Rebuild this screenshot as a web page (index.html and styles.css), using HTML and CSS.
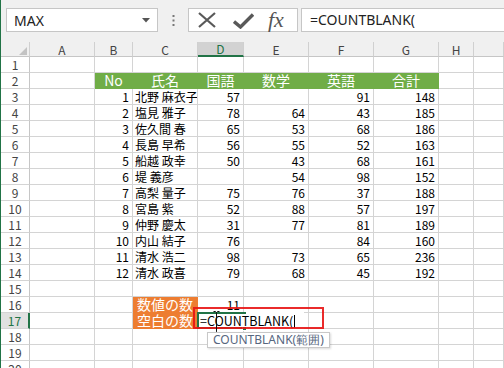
FILE: index.html
```html
<!DOCTYPE html>
<html>
<head>
    <title>COUNTBLANK</title>
    <link rel="stylesheet" href="styles.css">
</head>
<body>
<div class="app">
    <div class="bar">
        <div class="namebox">
            <span>MAX</span>
            <svg width="8" height="5" viewBox="0 0 8 5"><path d="M0 0 H8 L4 4.5 Z" fill="#555"/></svg>
        </div>
        <div class="grip">
            <svg width="3" height="11" viewBox="0 0 3 11"><rect x="0.5" y="0" width="2" height="2" fill="#777"/><rect x="0.5" y="4.5" width="2" height="2" fill="#777"/><rect x="0.5" y="9" width="2" height="2" fill="#777"/></svg>
        </div>
        <div class="buttons">
            <svg class="cancel" width="18" height="16" viewBox="0 0 18 16"><path d="M1 1 L17 15 M17 1 L1 15" stroke="#595959" stroke-width="2.2" fill="none"/></svg>
            <svg class="enter" width="21" height="16" viewBox="0 0 21 16"><path d="M1 8.5 L7.5 14 L20 1.5" stroke="#595959" stroke-width="3.4" fill="none"/></svg>
            <span class="fx">fx</span>
        </div>
        <div class="formula">=COUNTBLANK(</div>
    </div>

    <div class="sheet">
        <table class="grid">
            <colgroup>
                <col style="width:29px"><col style="width:65px"><col style="width:38px"><col style="width:65px"><col style="width:46px">
                <col style="width:65px"><col style="width:65px"><col style="width:65px"><col style="width:35px"><col style="width:30px">
            </colgroup>
            <thead>
                <tr>
                    <th class="corner"><svg width="8" height="8" viewBox="0 0 8 8"><path d="M8 0 V8 H0 Z" fill="#c3c3c3"/></svg></th>
                    <th>A</th><th>B</th><th>C</th><th class="on">D</th><th>E</th><th>F</th><th>G</th><th>H</th><th></th>
                </tr>
            </thead>
            <tbody>
                <tr><th>1</th><td></td><td></td><td></td><td></td><td></td><td></td><td></td><td></td><td></td></tr>
                <tr class="head"><th>2</th><td></td><td class="g">No</td><td class="g">氏名</td><td class="g">国語</td><td class="g">数学</td><td class="g">英語</td><td class="g">合計</td><td></td><td></td></tr>
                <tr><th>3</th><td></td><td class="n">1</td><td class="t">北野 麻衣子</td><td class="n">57</td><td class="n"></td><td class="n">91</td><td class="n">148</td><td></td><td></td></tr>
                <tr><th>4</th><td></td><td class="n">2</td><td class="t">塩見 雅子</td><td class="n">78</td><td class="n">64</td><td class="n">43</td><td class="n">185</td><td></td><td></td></tr>
                <tr><th>5</th><td></td><td class="n">3</td><td class="t">佐久間 春</td><td class="n">65</td><td class="n">53</td><td class="n">68</td><td class="n">186</td><td></td><td></td></tr>
                <tr><th>6</th><td></td><td class="n">4</td><td class="t">長島 早希</td><td class="n">56</td><td class="n">55</td><td class="n">52</td><td class="n">163</td><td></td><td></td></tr>
                <tr><th>7</th><td></td><td class="n">5</td><td class="t">船越 政幸</td><td class="n">50</td><td class="n">43</td><td class="n">68</td><td class="n">161</td><td></td><td></td></tr>
                <tr><th>8</th><td></td><td class="n">6</td><td class="t">堤 義彦</td><td class="n"></td><td class="n">54</td><td class="n">98</td><td class="n">152</td><td></td><td></td></tr>
                <tr><th>9</th><td></td><td class="n">7</td><td class="t">高梨 量子</td><td class="n">75</td><td class="n">76</td><td class="n">37</td><td class="n">188</td><td></td><td></td></tr>
                <tr><th>10</th><td></td><td class="n">8</td><td class="t">宮島 紫</td><td class="n">52</td><td class="n">88</td><td class="n">57</td><td class="n">197</td><td></td><td></td></tr>
                <tr><th>11</th><td></td><td class="n">9</td><td class="t">仲野 慶太</td><td class="n">31</td><td class="n">77</td><td class="n">81</td><td class="n">189</td><td></td><td></td></tr>
                <tr><th>12</th><td></td><td class="n">10</td><td class="t">内山 結子</td><td class="n">76</td><td class="n"></td><td class="n">84</td><td class="n">160</td><td></td><td></td></tr>
                <tr><th>13</th><td></td><td class="n">11</td><td class="t">清水 浩二</td><td class="n">98</td><td class="n">73</td><td class="n">65</td><td class="n">236</td><td></td><td></td></tr>
                <tr><th>14</th><td></td><td class="n">12</td><td class="t">清水 政喜</td><td class="n">79</td><td class="n">68</td><td class="n">45</td><td class="n">192</td><td></td><td></td></tr>
                <tr><th>15</th><td></td><td></td><td></td><td></td><td></td><td></td><td></td><td></td><td></td></tr>
                <tr><th>16</th><td></td><td></td><td class="o">数値の数</td><td class="n">11</td><td></td><td></td><td></td><td></td><td></td></tr>
                <tr><th class="on">17</th><td></td><td></td><td class="o">空白の数</td><td></td><td></td><td></td><td></td><td></td><td></td></tr>
                <tr><th>18</th><td></td><td></td><td></td><td></td><td></td><td></td><td></td><td></td><td></td></tr>
                <tr><th>19</th><td></td><td></td><td></td><td></td><td></td><td></td><td></td><td></td><td></td></tr>
                <tr><th>20</th><td></td><td></td><td></td><td></td><td></td><td></td><td></td><td></td><td></td></tr>
            </tbody>
        </table>

        <!-- cell in edit mode, over D17 -->
        <div class="editor">=COUNTBLANK(<span class="caret"></span></div>
        <div class="active"></div>
        <div class="handle"></div>
        <div class="mark"></div>
        <svg class="ibeam" width="7" height="22" viewBox="0 0 7 22"><path d="M0.5 0.5 H2.5 L3.5 1.5 L4.5 0.5 H6.5 M3.5 1.5 V20.5 M0.5 21.5 H2.5 L3.5 20.5 L4.5 21.5 H6.5" stroke="#111" stroke-width="1" fill="none"/></svg>
        <div class="tip">COUNTBLANK(範囲)</div>
    </div>
</div>
</body>
</html>
```

FILE: styles.css
```css
* { box-sizing: border-box; }
html, body { margin: 0; padding: 0; }
body { width: 504px; height: 368px; overflow: hidden; background: #fff; font-family: "Noto Sans CJK JP", sans-serif;}

.app { height: 368px; border-left: 1px solid #217346; }

/* formula bar */
.bar { display: flex; align-items: center; height: 42px; padding: 8px 0 10px 5px; background: #f0f0f0; }
.namebox { display: flex; align-items: center; justify-content: space-between; width: 152px; height: 24px; padding: 0 7px 0 7px; background: #fff; border: 1px solid #c6c6c6; font-family: "Noto Sans", sans-serif; font-size: 14px; color: #222; }
.grip { display: flex; justify-content: center; width: 30px; }
.buttons { display: flex; align-items: center; width: 110px; height: 24px; padding: 0 0 0 9px; background: #fff; border: 1px solid #c6c6c6; }
.cancel { margin-right: 17px; }
.enter { margin-right: 14px; margin-top: 1px; }
.fx { font-family: "Liberation Serif", serif; font-style: italic; font-size: 22px; color: #555; line-height: 22px; }
.formula { flex: 1; height: 24px; margin-left: 3px; padding-left: 8px; background: #fff; border: 1px solid #c6c6c6; border-right: 0; font-family: "Noto Sans", sans-serif; font-size: 14px; line-height: 22px; color: #222; }

/* grid */
.sheet { position: relative; }
.grid { table-layout: fixed; width: 503px; border-collapse: separate; border-spacing: 0; font-size: 12px; color: #000; }
.grid th, .grid td { padding: 0; overflow: hidden; white-space: nowrap; border-right: 1px solid #d4d4d4; border-bottom: 1px solid #d4d4d4; }
.grid thead tr { height: 14px; }
.grid thead th { background: #f0f0f0; font-weight: normal; color: #444; line-height: 13px; overflow: visible; border-right-color: #d0d0d0; border-bottom-color: #c6c6c6; }
.grid thead th.on { background: #d2d2d2; color: #217346; border-bottom: 2px solid #217346; }
.grid thead th.corner svg { display: block; margin: 3px 2px 0 auto; }
.grid tbody tr { height: 16px; }
.grid tbody th { background: #fff; font-weight: normal; color: #444; line-height: 14px; border-right-color: #c6c6c6; vertical-align: bottom; }
.grid tbody th.on { background: #e1e1e1; color: #217346; border-right: 2px solid #217346; }
.grid td { line-height: 14px; vertical-align: bottom; }
.grid td.n { text-align: right; padding-right: 3px; }
.grid td.t { text-align: left; padding-left: 2px; }
.grid td.g { background: #70ad47; border-color: #70ad47; color: #fff; font-size: 14px; text-align: center; line-height: 15px; overflow: visible; }
.grid td.o { background: #ed7d31; border-color: #ed7d31; color: #fff; font-size: 14px; text-align: center; line-height: 15px; overflow: visible; }

/* overlays on D17 */
.editor { position: absolute; left: 197px; top: 270px; width: 106px; height: 17px; padding: 1px 0 0 2px; background: #fff; font-size: 12.5px; line-height: 15px; color: #000; }
.caret { display: inline-block; width: 1px; height: 13px; margin-left: 1px; background: #000; vertical-align: -2px; }
.active { position: absolute; left: 196px; top: 270px; width: 49px; height: 17px; border: 2px solid #217346; border-right: 0; }
.handle { position: absolute; left: 241px; top: 284px; width: 5px; height: 5px; background: #217346; border: 1px solid #fff; }
.mark { position: absolute; left: 192px; top: 265px; width: 131px; height: 22px; border: 2px solid rgba(232, 20, 20, 0.9); }
.ibeam { position: absolute; left: 212px; top: 269px; }
.tip { position: absolute; left: 206px; top: 290px; height: 16px; padding: 0 5px; background: #fff; border: 1px solid #c8c8c8; box-shadow: 1px 1px 2px rgba(0, 0, 0, 0.15); font-family: "Noto Sans", sans-serif; font-size: 12px; line-height: 14px; color: #56667e; }
```
